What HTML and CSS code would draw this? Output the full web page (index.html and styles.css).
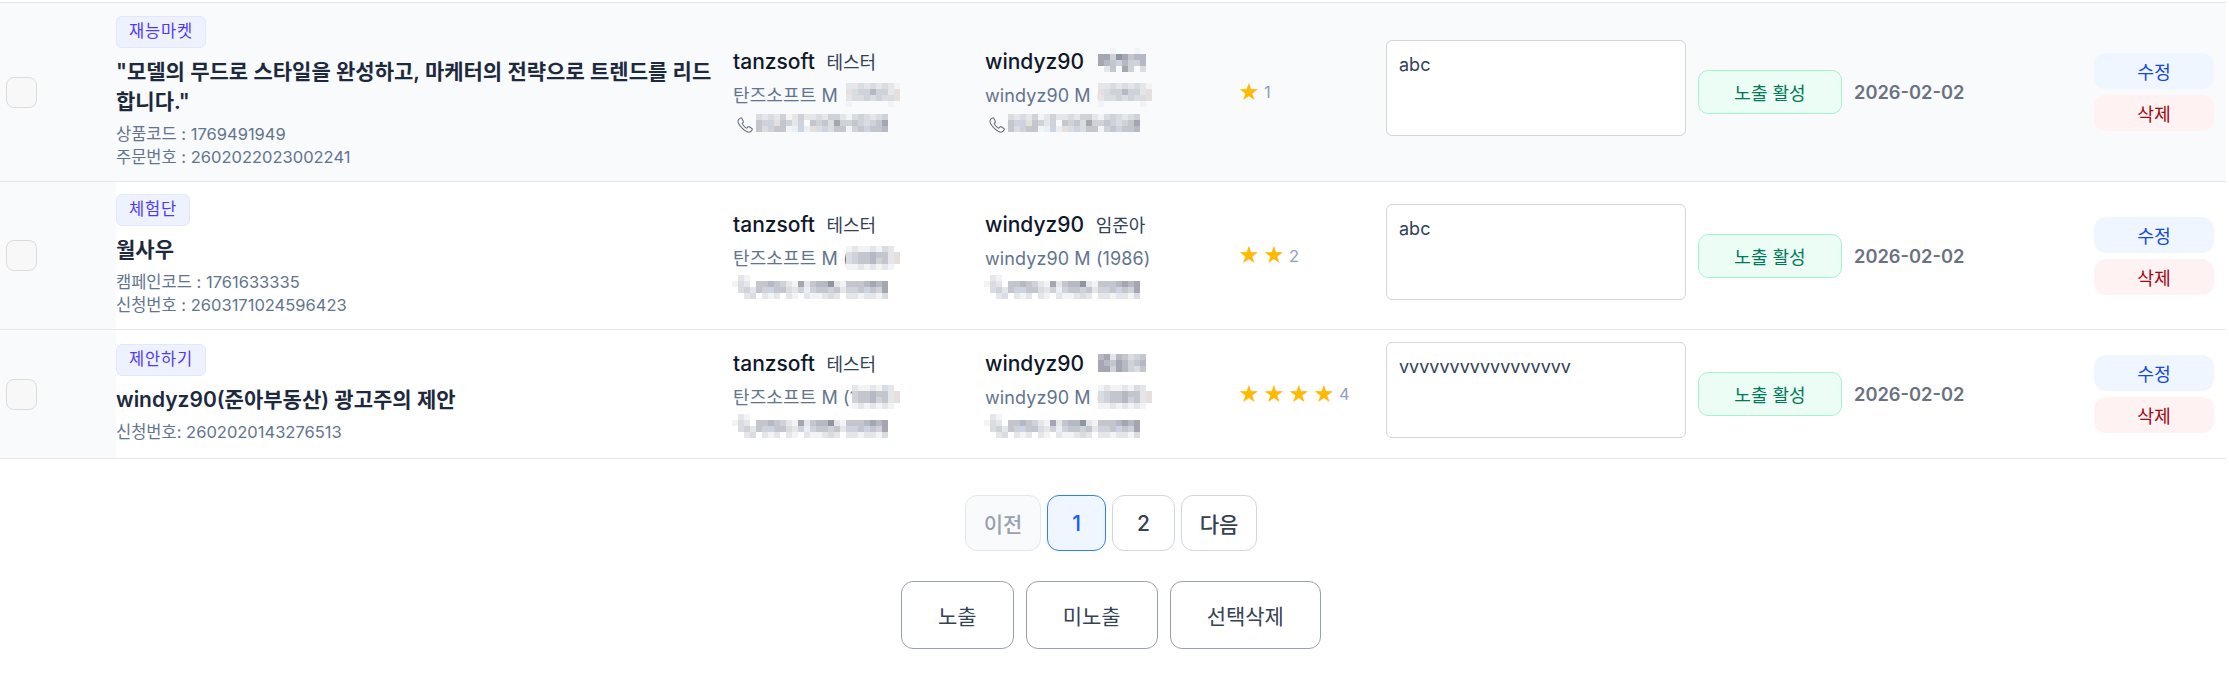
FILE: index.html
```html
<!DOCTYPE html>
<html lang="ko">
<head>
    <meta charset="UTF-8">
    <meta name="viewport" content="width=device-width, initial-scale=1.0">
    <title>리뷰 관리</title>
    <link rel="stylesheet" href="styles.css">
</head>
<body>

    <div class="review-list">

        <!-- Review 1 -->
        <div class="row row-hover">
            <div class="cell check"><span class="checkbox"></span></div>
            <div class="cell item">
                <span class="tag">재능마켓</span>
                <div class="title">"모델의 무드로 스타일을 완성하고, 마케터의 전략으로 트렌드를 리드합니다."</div>
                <div class="code">상품코드 : 1769491949</div>
                <div class="code">주문번호 : 2602022023002241</div>
            </div>
            <div class="cell user">
                <div class="user-id">tanzsoft <span class="user-name">테스터</span></div>
                <div class="user-info">탄즈소프트 M <span class="mask year" data-mask="yearA"></span></div>
                <div class="phone">
                    <svg class="phone-icon" viewBox="0 0 16 16"><path d="M3.6 .9 1.7 2.3C.2 4 2.200 8 4.900 10.900 7.900 13.900 11.800 16.100 13.700 14.500L15.100 12.800Q15.600 12.100 14.900 11.500L12.300 9.800Q11.600 9.400 11 10L10.200 10.900Q9.700 11.400 9 10.900 7 9.600 5.500 7.300 5 6.600 5.500 6.100L6.100 5.500Q6.700 4.900 6.300 4.200L4.900 1.400Q4.400 .5 3.600 .9Z"/></svg>
                    <span class="mask tel" data-mask="telA"></span>
                </div>
            </div>
            <div class="cell user">
                <div class="user-id">windyz90 <span class="mask name" data-mask="nameA"></span></div>
                <div class="user-info">windyz90 M (<span class="mask year" data-mask="yearA"></span></div>
                <div class="phone">
                    <svg class="phone-icon" viewBox="0 0 16 16"><path d="M3.6 .9 1.7 2.3C.2 4 2.200 8 4.900 10.900 7.900 13.900 11.800 16.100 13.700 14.500L15.100 12.800Q15.600 12.100 14.900 11.500L12.300 9.800Q11.600 9.400 11 10L10.200 10.900Q9.700 11.400 9 10.900 7 9.600 5.500 7.300 5 6.600 5.500 6.100L6.100 5.500Q6.700 4.900 6.300 4.200L4.900 1.400Q4.400 .5 3.600 .9Z"/></svg>
                    <span class="mask tel" data-mask="telA"></span>
                </div>
            </div>
            <div class="cell rating"><span class="star">★</span><span class="score">1</span></div>
            <div class="cell"><textarea class="review-text">abc</textarea></div>
            <div class="cell"><button class="status">노출 활성</button></div>
            <div class="cell date">2026-02-02</div>
            <div class="cell actions">
                <button class="btn edit">수정</button>
                <button class="btn delete">삭제</button>
            </div>
        </div>

        <!-- Review 2 -->
        <div class="row">
            <div class="cell check"><span class="checkbox"></span></div>
            <div class="cell item">
                <span class="tag">체험단</span>
                <div class="title">월사우</div>
                <div class="code">캠페인코드 : 1761633335</div>
                <div class="code">신청번호 : 2603171024596423</div>
            </div>
            <div class="cell user">
                <div class="user-id">tanzsoft <span class="user-name">테스터</span></div>
                <div class="user-info">탄즈소프트 M (<span class="mask year" data-mask="yearB"></span></div>
                <div class="phone"><span class="mask tel-full" data-mask="telB"></span></div>
            </div>
            <div class="cell user">
                <div class="user-id">windyz90 <span class="user-name">임준아</span></div>
                <div class="user-info">windyz90 M (1986)</div>
                <div class="phone"><span class="mask tel-full" data-mask="telB"></span></div>
            </div>
            <div class="cell rating"><span class="star">★</span><span class="star">★</span><span class="score">2</span></div>
            <div class="cell"><textarea class="review-text">abc</textarea></div>
            <div class="cell"><button class="status">노출 활성</button></div>
            <div class="cell date">2026-02-02</div>
            <div class="cell actions">
                <button class="btn edit">수정</button>
                <button class="btn delete">삭제</button>
            </div>
        </div>

        <!-- Review 3 -->
        <div class="row">
            <div class="cell check"><span class="checkbox"></span></div>
            <div class="cell item">
                <span class="tag">제안하기</span>
                <div class="title">windyz90(준아부동산) 광고주의 제안</div>
                <div class="code">신청번호: 2602020143276513</div>
            </div>
            <div class="cell user">
                <div class="user-id">tanzsoft <span class="user-name">테스터</span></div>
                <div class="user-info">탄즈소프트 M (1<span class="mask year late" data-mask="yearC"></span></div>
                <div class="phone"><span class="mask tel-full" data-mask="telB"></span></div>
            </div>
            <div class="cell user">
                <div class="user-id">windyz90 <span class="mask name low" data-mask="nameB"></span></div>
                <div class="user-info">windyz90 M (<span class="mask year" data-mask="yearB"></span></div>
                <div class="phone"><span class="mask tel-full" data-mask="telB"></span></div>
            </div>
            <div class="cell rating"><span class="star">★</span><span class="star">★</span><span class="star">★</span><span class="star">★</span><span class="score">4</span></div>
            <div class="cell"><textarea class="review-text">vvvvvvvvvvvvvvvvv</textarea></div>
            <div class="cell"><button class="status">노출 활성</button></div>
            <div class="cell date">2026-02-02</div>
            <div class="cell actions">
                <button class="btn edit">수정</button>
                <button class="btn delete">삭제</button>
            </div>
        </div>
    </div>

    <div class="pagination">
        <button class="page disabled">이전</button>
        <button class="page active">1</button>
        <button class="page">2</button>
        <button class="page">다음</button>
    </div>

    <div class="bulk">
        <button class="bulk-btn">노출</button>
        <button class="bulk-btn">미노출</button>
        <button class="bulk-btn">선택삭제</button>
    </div>

    <script src="script.js"></script>
</body>
</html>
```
FILE: styles.css
```css
* {
    box-sizing: border-box;
}
body {
    margin: 0;
    background-color: white;
    font-family: Inter, "Noto Sans CJK KR", sans-serif;
    color: #1d293d;
    overflow: hidden;
}
button, textarea {
    font-family: inherit;
    margin: 0;
}
.review-list {
    width: 2226px;
    padding-top: 2px;
}
.row {
    display: grid;
    grid-template-columns: 116px 617px 252px 254px 147px 312px 156px 240px 132px;
    min-height: 129px;
    border-bottom: 1px solid #e5e7eb;
}
.row:first-child {
    min-height: 180px;
    border-top: 1px solid #e5e7eb;
}
.row-hover {
    background-color: #f9fafc;
}
.cell {
    display: flex;
    align-items: center;
}
.check {
    background-color: #f9fafc;
    padding-left: 6px;
}
.checkbox {
    width: 31px;
    height: 31px;
    border: 1px solid #dcdcdc;
    border-radius: 8px;
    background-color: #f8f8f8;
}
.item {
    flex-direction: column;
    align-items: flex-start;
    justify-content: center;
    padding: 12px 17px 12px 0;
}
.tag {
    height: 32px;
    line-height: 29px;
    padding: 0 12px;
    border: 1px solid #e0e7ff;
    border-radius: 6px;
    background-color: #eef2ff;
    color: #4f39f6;
    font-size: 16.5px;
    letter-spacing: 0.8px;
}
.title {
    margin: 9px 0 6px;
    width: 604px;
    font-size: 21px;
    font-weight: 600;
    line-height: 30px;
    word-break: break-all;
}
.code {
    font-size: 16.5px;
    line-height: 23px;
    color: #62748e;
}
.user {
    flex-direction: column;
    align-items: flex-start;
    justify-content: center;
}
.user-id, .user-info, .phone {
    position: relative;
    white-space: nowrap;
}
.user-id {
    height: 32px;
    line-height: 32px;
    font-size: 21px;
    font-weight: 500;
    color: #0f172b;
}
.user-name {
    margin-left: 6px;
    font-size: 18px;
    font-weight: 400;
    color: #314158;
}
.user-info {
    height: 33px;
    line-height: 35px;
    font-size: 18px;
    letter-spacing: 0.1px;
    color: #62748e;
}
.phone {
    height: 28px;
    width: 200px;
}
.phone-icon {
    display: block;
    margin: 6px 0 0 4px;
    width: 16px;
    height: 16px;
    fill: none;
    stroke: #6a7282;
    stroke-width: 1.1;
}
.mask {
    position: absolute;
    line-height: 0;
}
.year {
    left: 113px;
    top: 5px;
}
.year.late {
    left: 119px;
}
.name {
    left: 113px;
    top: 2px;
}
.name.low {
    top: 6px;
}
.tel {
    left: 23px;
    top: 3px;
}
.tel-full {
    left: -1px;
    top: 1px;
}
.rating {
    gap: 7px;
}
.star {
    width: 18px;
    font-size: 21px;
    text-indent: -1px;
    color: #ffb900;
}
.score {
    font-size: 16.5px;
    color: #90a1b9;
}
.review-text {
    display: block;
    width: 300px;
    height: 96px;
    margin-bottom: 8px;
    padding: 12px;
    border: 1px solid #d1d5dc;
    border-radius: 6px;
    background-color: white;
    color: #314158;
    font-size: 18px;
    line-height: 24px;
    resize: none;
    overflow: hidden;
}
.status {
    width: 144px;
    height: 44px;
    border: 1px solid #a4f4cf;
    border-radius: 10px;
    background-color: #ecfdf5;
    color: #007a55;
    font-size: 18px;
}
.date {
    font-size: 18.3px;
    font-weight: 600;
    color: #6a7282;
}
.actions {
    flex-direction: column;
    align-items: flex-start;
    justify-content: center;
    gap: 6px;
}
.btn {
    width: 120px;
    height: 36px;
    padding: 0;
    border: none;
    border-radius: 12px;
    font-size: 18.3px;
}
.edit {
    background-color: #eff6ff;
    color: #1447e6;
}
.delete {
    background-color: #fef2f2;
    color: #9f0712;
}
.pagination, .bulk {
    display: flex;
    justify-content: center;
    width: 2222px;
}
.pagination {
    gap: 6px;
    margin-top: 36px;
}
.page {
    height: 56px;
    padding: 0 17.7px;
    border: 1px solid #d1d5dc;
    border-radius: 12px;
    background-color: white;
    color: #364153;
    font-size: 21px;
    font-weight: 500;
}
.page.active {
    border-color: #2b7fff;
    background-color: #eff6ff;
    color: #155dfc;
}
.page.disabled {
    border-color: #e5e7eb;
    background-color: #f9fafb;
    color: #99a1af;
}
.page:nth-child(2) {
    width: 59px;
}
.page:nth-child(3) {
    width: 63px;
}
.bulk {
    gap: 12px;
    margin-top: 30px;
}
.bulk-btn {
    height: 68px;
    padding: 0 36px;
    border: 1px solid #99a1af;
    border-radius: 12px;
    background-color: white;
    color: #364153;
    font-size: 21px;
}
```
FILE: script.js
```js
// masked personal data is drawn as a grid of 6px blocks
const colors = {
    a: "#f1f3f5", b: "#e4e6e9", c: "#d9dde1", d: "#cfd2d8", e: "#c4c6ce",
    f: "#b4b9c3", g: "#a4a7b1", h: "#8d96a3", p: "#ccd4e4", k: "#e9eff7", w: "#e6dfdc"
};

const masks = {
    yearA: ["bbcbcbcba", "wcddfddbw", "bccdcdccw", "a......a."],
    yearB: ["abaabacb.", "cdeefeebw", "cdeefdebw", "aabababa."],
    yearC: ["baabacb.", "deefeebw", "deefdebw", "abababa."],
    nameA: ["..a...a.", "ggdhgeff", "gfepfddf", ".be.gd.c"],
    nameB: ["fgbfecde", "gfegfdef", "ggdgfdce"],
    telA: ["cbcbdabdbbcbddbacdcbcd", "edpwedbd.edecgddedcdeg", "ecdeeakpkwcpceeadepeef"],
    telB: [".ba.......................", "acb.eefedbagbeffhbaeeefgfg", ".cdbedpeecbdkdeedebddepedg", "..bc.bab.ba.baabcb.bbabbac"]
};

document.querySelectorAll(".mask").forEach((el) => {
    const rows = masks[el.dataset.mask];
    let rects = "";
    rows.forEach((row, y) => {
        [...row].forEach((c, x) => {
            if (colors[c]) {
                rects += `<rect x="${x * 6}" y="${y * 6}" width="6" height="6" fill="${colors[c]}"/>`;
            }
        });
    });
    el.innerHTML = `<svg width="${rows[0].length * 6}" height="${rows.length * 6}" shape-rendering="crispEdges">${rects}</svg>`;
});
```
